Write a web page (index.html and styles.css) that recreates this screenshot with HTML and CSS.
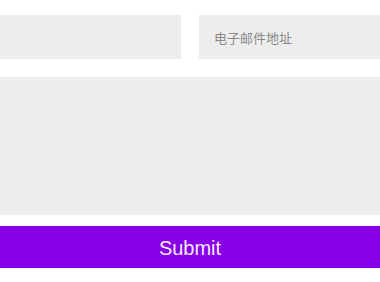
FILE: index.html
```html
<!DOCTYPE html>
<html lang="zh">
<head>
<meta charset="utf-8">
<link rel="stylesheet" href="styles.css">
</head>
<body>
<form class="form">
  <div class="row">
    <input class="field" type="text">
    <input class="field" type="email" placeholder="电子邮件地址">
  </div>
  <textarea class="message"></textarea>
  <button class="submit" type="button">Submit</button>
</form>
</body>
</html>
```
FILE: styles.css
```css
html, body {
  margin: 0;
  padding: 0;
  background: #ffffff;
}
.form {
  display: flex;
  flex-direction: column;
  padding-top: 15px;
  width: 380px;
}
.row {
  display: grid;
  grid-template-columns: 181px 181px;
  column-gap: 18px;
}
.field {
  box-sizing: border-box;
  height: 44px;
  border: none;
  outline: none;
  margin: 0;
  background: #ededed;
  padding: 0 15px;
  font-family: "Noto Sans CJK SC", "Liberation Sans", sans-serif;
  font-size: 13px;
  color: #555;
}
.field::placeholder {
  color: #8a8a8a;
}
.message {
  box-sizing: border-box;
  display: block;
  margin: 18px 0 0;
  height: 138px;
  border: none;
  outline: none;
  resize: none;
  background: #ededed;
  padding: 10px 15px;
}
.submit {
  margin-top: 11px;
  height: 42px;
  border: none;
  background: #8700e8;
  color: #f6eaff;
  font-family: "Liberation Sans", Arial, sans-serif;
  font-size: 20px;
  line-height: 42px;
  padding: 1px 0 0;
}
```
